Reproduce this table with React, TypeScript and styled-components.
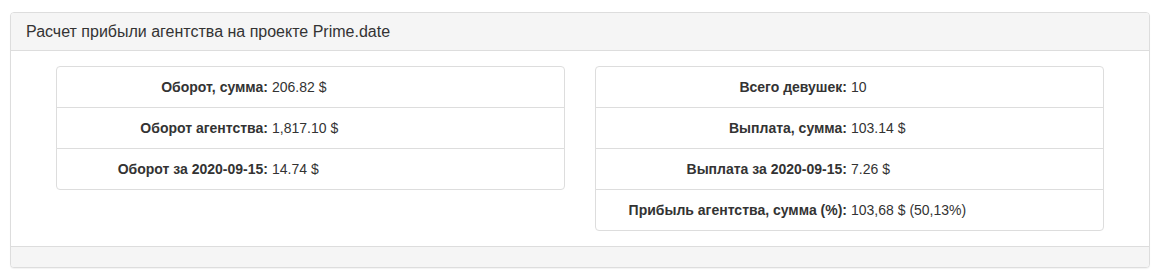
import React from "react";
import styled, { createGlobalStyle } from "styled-components";

type Stat = { label: string; value: string };

const turnover: Stat[] = [
  { label: "Оборот, сумма:", value: "206.82 $" },
  { label: "Оборот агентства:", value: "1,817.10 $" },
  { label: "Оборот за 2020-09-15:", value: "14.74 $" },
];

const payouts: Stat[] = [
  { label: "Всего девушек:", value: "10" },
  { label: "Выплата, сумма:", value: "103.14 $" },
  { label: "Выплата за 2020-09-15:", value: "7.26 $" },
  { label: "Прибыль агентства, сумма (%):", value: "103,68 $ (50,13%)" },
];

const renderList = (items: Stat[], labelWidth: number) => (
  <ListGroup>
    {items.map((s, index) => (
      <ListItem key={index} $labelWidth={labelWidth}>
        <Label>{s.label}</Label>
        <Value>{s.value}</Value>
      </ListItem>
    ))}
  </ListGroup>
);

const App = () => {
  return (
    <>
      <GlobalStyle />
      <Page>
        <Panel>
          <PanelHeading>
            <PanelTitle>Расчет прибыли агентства на проекте Prime.date</PanelTitle>
          </PanelHeading>
          <PanelBody>
            <Columns>
              {renderList(turnover, 196)}
              {renderList(payouts, 236)}
            </Columns>
          </PanelBody>
          <PanelFooter />
        </Panel>
      </Page>
    </>
  );
};

export default App;

const GlobalStyle = createGlobalStyle`
  body {
    margin: 0;
    background: #fff;
    font-family: "Liberation Sans", Arial, sans-serif;
    font-size: 14px;
    line-height: 20px;
    color: #333;
  }
  * {
    box-sizing: border-box;
  }
`;

const Page = styled.div`
  padding: 12px 12px 10px 10px;
`;

const Panel = styled.div`
  background: #fff;
  border: 1px solid #ddd;
  border-radius: 4px;
  box-shadow: 0 1px 1px rgba(0, 0, 0, 0.05);
`;

const PanelHeading = styled.div`
  padding: 10px 15px;
  background: #f5f5f5;
  border-bottom: 1px solid #ddd;
  border-radius: 3px 3px 0 0;
`;

const PanelTitle = styled.h3`
  margin: 0;
  font-size: 16px;
  font-weight: normal;
  line-height: 17px;
  color: #333;
`;

const PanelBody = styled.div`
  padding: 15px;
`;

const Columns = styled.div`
  display: grid;
  grid-template-columns: 1fr 1fr;
  column-gap: 30px;
  align-items: start;
  padding: 0 30px;
`;

const ListGroup = styled.div`
  display: flex;
  flex-direction: column;
`;

const ListItem = styled.div<{ $labelWidth: number }>`
  display: grid;
  grid-template-columns: ${(p) => p.$labelWidth}px 1fr;
  column-gap: 4px;
  padding: 10px 15px;
  border: 1px solid #ddd;
  margin-bottom: -1px;
  background: #fff;

  &:first-child {
    border-radius: 4px 4px 0 0;
  }

  &:last-child {
    margin-bottom: 0;
    border-radius: 0 0 4px 4px;
  }
`;

const Label = styled.b`
  font-weight: bold;
  text-align: right;
  white-space: nowrap;
`;

const Value = styled.span`
  white-space: nowrap;
`;

const PanelFooter = styled.div`
  height: 21px;
  background: #f5f5f5;
  border-top: 1px solid #ddd;
  border-radius: 0 0 3px 3px;
`;
